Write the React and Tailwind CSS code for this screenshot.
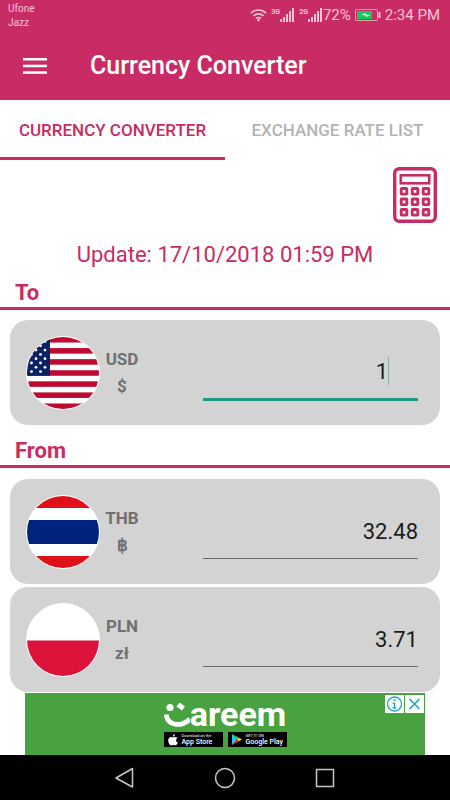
import React, { useState } from "react";

const US_STRIPES = [0, 2, 4, 6, 8, 10, 12];
const STAR_ROWS = [4.5, 8.8, 13.1, 17.4, 21.7, 26, 30.3, 34.6];
const STAR_COLUMNS = [9, 18];
const KEY_ROWS = [21.5, 32, 42.5];
const KEY_COLUMNS = [8.2, 19.2, 30.2];

function Flag({ label, children }) {
  return (
    <svg
      role="img"
      aria-label={label}
      viewBox="0 0 72 72"
      preserveAspectRatio="none"
      className="h-[74px] w-[74px] shrink-0 rounded-full border border-white bg-white"
    >
      {children}
    </svg>
  );
}

function UsFlag() {
  return (
    <Flag label="United States">
      {US_STRIPES.map((n) => (
        <rect key={n} y={n * 5.54} width="72" height="5.54" fill="#bd0a30" />
      ))}
      <rect width="23" height="38.8" fill="#0b2265" />
      {STAR_ROWS.map((y, i) =>
        STAR_COLUMNS.map((x) => (
          <circle key={x + "-" + y} cx={i % 2 ? x - 4.5 : x} cy={y} r="1.4" fill="#fff" />
        ))
      )}
    </Flag>
  );
}

function ThaiFlag() {
  return (
    <Flag label="Thailand">
      <rect width="72" height="12" fill="#e01019" />
      <rect y="24" width="72" height="24" fill="#00247d" />
      <rect y="60" width="72" height="12" fill="#e01019" />
    </Flag>
  );
}

function PolishFlag() {
  return (
    <Flag label="Poland">
      <rect y="36.5" width="72" height="36" fill="#dc143c" />
    </Flag>
  );
}

function Signal({ network }) {
  return (
    <span className="flex h-3.5 items-start">
      <span className="text-[7px] leading-[8px] font-bold">{network}</span>
      <svg width="15" height="14" viewBox="0 0 15 14" fill="currentColor" aria-hidden="true">
        <rect x="0" y="11" width="2" height="3" />
        <rect x="3" y="9" width="2" height="5" />
        <rect x="6" y="6" width="2" height="8" />
        <rect x="9" y="3" width="2" height="11" />
        <rect x="12" y="0" width="2" height="14" />
      </svg>
    </span>
  );
}

function StatusBar() {
  return (
    <div className="flex h-8 items-start justify-between pr-2.5 pl-2 text-[#f8c3d8]">
      <div className="pt-0.5 text-[10px] leading-[14px]">
        <div>Ufone</div>
        <div>Jazz</div>
      </div>
      <div className="flex items-center gap-1 pt-1">
        <svg width="17" height="14" viewBox="0 0 18 14" fill="none" stroke="currentColor" strokeWidth="1.7" aria-hidden="true">
          <path d="M1 5a11.3 11.3 0 0 1 16 0M3.7 8a7.5 7.5 0 0 1 10.6 0M6.3 10.7a3.8 3.8 0 0 1 5.4 0" />
          <circle cx="9" cy="12.4" r="1.4" fill="currentColor" stroke="none" />
        </svg>
        <Signal network="3G" />
        <Signal network="2G" />
        <span className="-ml-1 text-[15px] leading-[22px]">72%</span>
        <svg width="26" height="12" viewBox="0 0 26 12" fill="none" aria-hidden="true">
          <rect x="0.5" y="0.5" width="22" height="11" rx="1" stroke="#e5a9a5" />
          <rect x="2" y="2" width="15" height="8" fill="#14c95c" />
          <path d="M6.500 6 10.500 4v1.500l5 .5-4.500 2V6.500z" fill="#fff" />
          <path d="M24.500 3v6" stroke="currentColor" strokeWidth="2" />
        </svg>
        <span className="text-[15px] leading-[22px]">2:34 PM</span>
      </div>
    </div>
  );
}

function CalculatorIcon() {
  return (
    <svg width="44" height="56" viewBox="0 0 44 56" fill="none" stroke="#c72c63" aria-hidden="true">
      <rect x="1.700" y="1.700" width="40.600" height="52.600" rx="4.500" strokeWidth="3.400" />
      <rect x="7.800" y="8.300" width="28.400" height="8" strokeWidth="2.600" />
      {KEY_ROWS.map((y) =>
        KEY_COLUMNS.map((x) => (
          <rect key={x + "-" + y} x={x} y={y} width="5.600" height="5.600" rx="0.500" strokeWidth="2.900" />
        ))
      )}
    </svg>
  );
}

function SectionTitle({ children }) {
  return (
    <h2 className="border-b-[3px] border-[#c72c63] pl-[15px] text-[22px] leading-7 font-bold text-[#c72c63]">
      {children}
    </h2>
  );
}

function CurrencyCard({ flag, code, symbol, value, onChange, active }) {
  return (
    <div className="flex h-[105px] items-center rounded-[18px] bg-[#d3d3d3] pr-[22px] pl-4">
      {flag}
      <label htmlFor={code} className="w-11 shrink-0 text-center text-[17px] leading-[27px] font-bold text-[#707070]">
        {code}
        <span className="block">{symbol}</span>
      </label>
      <div className="relative ml-[59px] min-w-0 flex-1">
        <input
          id={code}
          inputMode="decimal"
          value={value}
          onChange={onChange}
          readOnly={!active}
          className={
            active
              ? "block h-14 w-full border-b-[3px] border-[#1f9688] bg-transparent pr-[30px] text-right text-[22px] text-[#1c1c1c] outline-none"
              : "block h-[54px] w-full border-b border-[#6b6b6b] bg-transparent text-right text-[22px] text-[#1c1c1c] outline-none"
          }
        />
        {active && <span className="absolute top-3 right-[29px] h-7 w-px bg-[#7fb5ae]" />}
      </div>
    </div>
  );
}

function StoreBadge({ icon, caption, name }) {
  return (
    <a href="#store" className="flex h-[15px] w-[59px] items-center gap-1 bg-black pl-1 text-white">
      {icon}
      <span className="whitespace-nowrap">
        <span className="block text-[4px] leading-[5px]">{caption}</span>
        <span className="block text-[7px] leading-[9px] font-medium">{name}</span>
      </span>
    </a>
  );
}

function AdBanner() {
  return (
    <aside className="relative mx-[25px] flex h-[62px] flex-col items-center bg-[#48a23f]">
      <div className="mt-2 flex h-[31px] items-start text-white">
        <svg width="26" height="28" viewBox="0 0 26 28" fill="none" stroke="#fff" aria-label="C" role="img">
          <circle cx="6" cy="6.500" r="3.600" fill="#fff" stroke="none" />
          <path d="M14 3.500 19.500 7.500" strokeWidth="5" />
          <path d="M2.200 13.500C3.500 25 17 26.500 26 18" strokeWidth="4.800" />
        </svg>
        <span className="text-[34px] leading-[26px] font-bold">areem</span>
      </div>
      <div className="flex gap-[5px]">
        <StoreBadge
          caption="Download on the"
          name="App Store"
          icon={
            <svg width="10" height="12" viewBox="0 0 10 12" fill="#fff" aria-hidden="true">
              <path d="M6.900 0C7 1.500 6 2.700 4.800 2.700 4.700 1.400 5.700.2 6.900 0zM5 3.500c.6 0 1.200-.6 2.300-.6.8 0 1.600.4 2.100 1.100-1.900 1.200-1.600 3.700.4 4.500C9.300 9.900 8.300 11.500 7.200 11.500c-.7 0-1-.4-1.900-.4s-1.200.4-1.900.4C1.800 11.500.2 8.700.2 6.500.2 4.200 1.600 3 3 3c.9 0 1.500.5 2 .5z" />
            </svg>
          }
        />
        <StoreBadge
          caption="GET IT ON"
          name="Google Play"
          icon={
            <svg width="10" height="11" viewBox="0 0 10 11" aria-hidden="true">
              <path d="M0 0 5 5.500 0 11z" fill="#20c8ef" />
              <path d="M0 0 7 3.800 5 5.500z" fill="#25cf72" />
              <path d="M0 11 7 7.200 5 5.500z" fill="#ef3b46" />
              <path d="M7 3.800 10 5.500 7 7.200 5 5.500z" fill="#ffc928" />
            </svg>
          }
        />
      </div>
      <div className="absolute top-0.5 right-px flex gap-px">
        <button type="button" aria-label="About this ad" className="h-[18px] w-[19px] bg-white">
          <svg width="19" height="18" viewBox="0 0 19 18" fill="none" stroke="#23a6c4" aria-hidden="true">
            <circle cx="9.500" cy="9" r="7" strokeWidth="1.300" />
            <path d="M9.500 8v5M7.800 8.200h1.700M7.500 13h4" strokeWidth="1.500" />
            <circle cx="9.500" cy="5" r="1.100" fill="#23a6c4" stroke="none" />
          </svg>
        </button>
        <button type="button" aria-label="Close ad" className="h-[18px] w-[19px] bg-white">
          <svg width="19" height="18" viewBox="0 0 19 18" fill="none" stroke="#23a6c4" strokeWidth="1.700" aria-hidden="true">
            <path d="m4.500 4 10 10m0-10-10 10" />
          </svg>
        </button>
      </div>
    </aside>
  );
}

function NavigationBar() {
  return (
    <nav className="flex h-[45px] items-center justify-center gap-[76px] bg-black">
      <button type="button" aria-label="Back">
        <svg width="24" height="24" viewBox="0 0 24 24" fill="none" stroke="#c8c8c8" strokeWidth="1.500" strokeLinejoin="round">
          <path d="M19.500 2.500v18.500L3 12z" />
        </svg>
      </button>
      <button type="button" aria-label="Home">
        <svg width="24" height="24" viewBox="0 0 24 24" fill="none" stroke="#c8c8c8" strokeWidth="1.500">
          <circle cx="12" cy="12" r="9.500" />
        </svg>
      </button>
      <button type="button" aria-label="Recent apps">
        <svg width="24" height="24" viewBox="0 0 24 24" fill="none" stroke="#c8c8c8" strokeWidth="1.500" strokeLinejoin="round">
          <rect x="3.500" y="3.500" width="17" height="17" />
        </svg>
      </button>
    </nav>
  );
}

export default function App() {
  const [amount, setAmount] = useState("1");

  return (
    <div className="flex min-h-screen flex-col bg-white font-['Roboto',sans-serif]">
      <header className="bg-[#c92c65]">
        <StatusBar />
        <div className="flex h-[68px] items-center gap-[43px] pl-[23px] text-white">
          <button type="button" aria-label="Open menu">
            <svg width="24" height="18" viewBox="0 0 24 18" fill="#fff" aria-hidden="true">
              <rect y="1" width="24" height="2.500" />
              <rect y="7.700" width="24" height="2.500" />
              <rect y="14.300" width="24" height="2.500" />
            </svg>
          </button>
          <h1 className="text-[25px] font-medium">Currency Converter</h1>
        </div>
      </header>

      <div role="tablist" className="grid h-[60px] grid-cols-2 text-[17px] font-medium whitespace-nowrap">
        <button type="button" role="tab" aria-selected="true" className="border-b-[3px] border-[#c72c63] pt-1 text-[#c72c63]">
          CURRENCY CONVERTER
        </button>
        <button type="button" role="tab" aria-selected="false" className="border-b-[3px] border-transparent pt-1 text-[#b3b3b3]">
          EXCHANGE RATE LIST
        </button>
      </div>

      <main className="flex-1">
        <div className="flex justify-end pt-[7px] pr-[13px]">
          <button type="button" aria-label="Calculator">
            <CalculatorIcon />
          </button>
        </div>
        <p className="pt-4 text-center text-[22px] leading-8 text-[#c72c63]">Update: 17/10/2018 01:59 PM</p>

        <section className="pt-2">
          <SectionTitle>To</SectionTitle>
          <div className="px-2.5 pt-2.5">
            <CurrencyCard
              flag={<UsFlag />}
              code="USD"
              symbol="$"
              value={amount}
              onChange={(event) => setAmount(event.target.value)}
              active
            />
          </div>
        </section>

        <section className="pt-3">
          <SectionTitle>From</SectionTitle>
          <div className="flex flex-col gap-[3px] px-2.5 pt-[11px]">
            <CurrencyCard flag={<ThaiFlag />} code="THB" symbol="฿" value="32.48" />
            <CurrencyCard flag={<PolishFlag />} code="PLN" symbol="zł" value="3.71" />
          </div>
        </section>
      </main>

      <AdBanner />
      <NavigationBar />
    </div>
  );
}
